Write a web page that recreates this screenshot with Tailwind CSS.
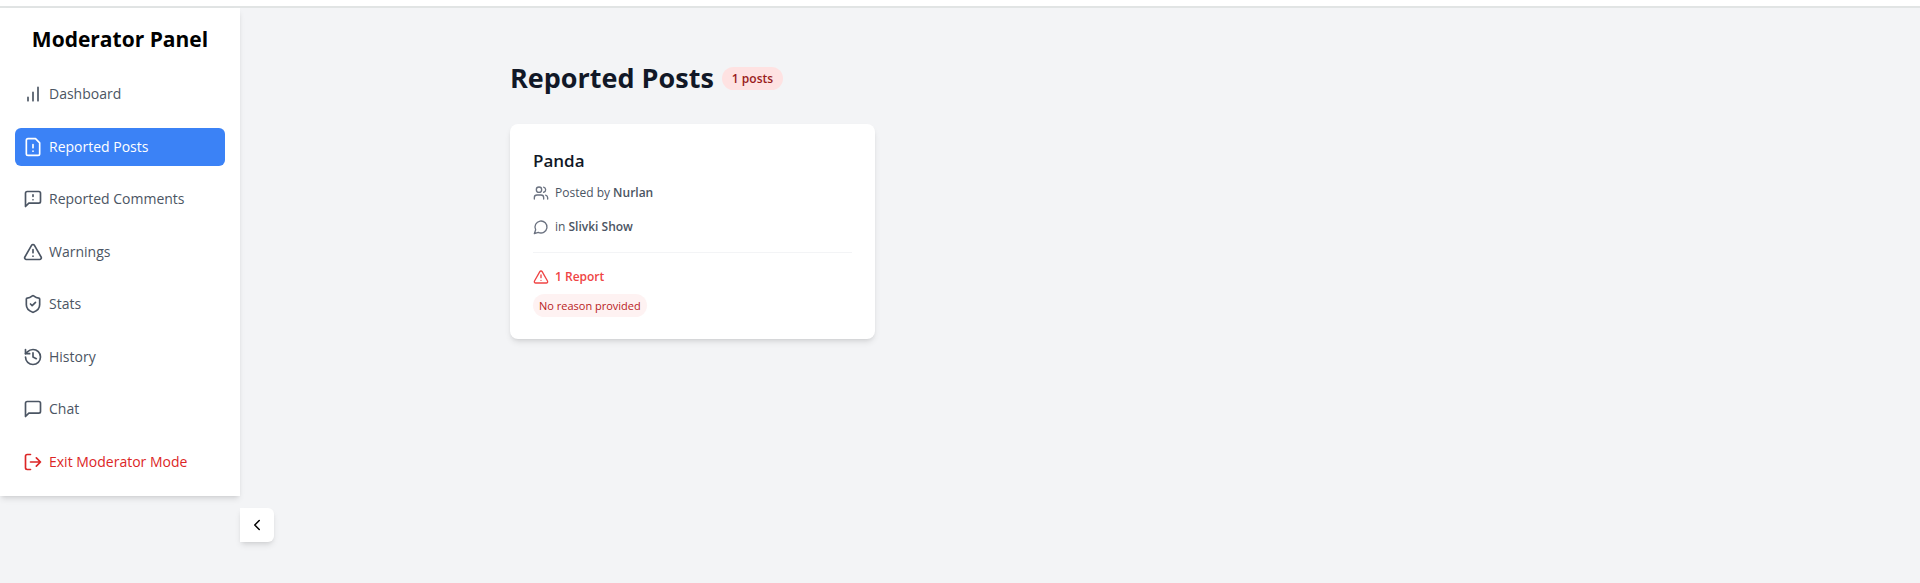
<!DOCTYPE html>
<html lang="en">
<head>
<meta charset="utf-8">
<meta name="viewport" content="width=device-width, initial-scale=1">
<title>Moderator Panel</title>
<script src="https://cdn.jsdelivr.net/npm/@tailwindcss/browser@4"></script>
</head>
<body class="min-h-screen bg-[#f3f4f6] font-['Segoe_UI','Open_Sans','Noto_Sans',sans-serif] text-gray-900">
<svg class="hidden" aria-hidden="true">
  <symbol id="warning" viewBox="0 0 24 24"><path d="m21.73 18-8-14a2 2 0 0 0-3.48 0l-8 14A2 2 0 0 0 4 21h16a2 2 0 0 0 1.73-3"/><path d="M12 9v4M12 17h.01"/></symbol>
</svg>
<header class="h-2 border-b-2 border-[#e1e4e4] bg-white"></header>
<div class="flex items-start">
  <aside class="relative w-60 shrink-0 bg-white px-[15px] pb-2 shadow-md">
    <h2 class="pt-[15px] pb-[13px] text-center text-[21px] leading-8 font-bold text-black">Moderator Panel</h2>
    <nav class="grid h-[420px] grid-rows-8 items-center text-[14px] leading-[22px] text-[#4b5563] [&_svg]:size-5 [&_svg]:shrink-0 [&_svg]:fill-none [&_svg]:stroke-current [&_svg]:stroke-2 [&_a]:flex [&_a]:h-[38px] [&_a]:items-center [&_a]:gap-[6px] [&_a]:rounded-md [&_a]:px-2 [&_svg]:[stroke-linecap:round] [&_svg]:[stroke-linejoin:round]">
      <a href="#"><svg viewBox="0 0 24 24"><path d="M12 20V10M18 20V4M6 20v-4"/></svg>Dashboard</a>
      <a href="#" aria-current="page" class="bg-[#3b82f6] text-white"><svg viewBox="0 0 24 24"><path d="M15 2H6a2 2 0 0 0-2 2v16a2 2 0 0 0 2 2h12a2 2 0 0 0 2-2V7z"/><path d="M12 9v4M12 17h.01"/></svg>Reported Posts</a>
      <a href="#"><svg viewBox="0 0 24 24"><path d="M21 15a2 2 0 0 1-2 2H7l-4 4V5a2 2 0 0 1 2-2h14a2 2 0 0 1 2 2z"/><path d="M12 7v2M12 13h.01"/></svg>Reported Comments</a>
      <a href="#"><svg><use href="#warning"/></svg>Warnings</a>
      <a href="#"><svg viewBox="0 0 24 24"><path d="M20 13c0 5-3.500 7.500-7.660 8.950a1 1 0 0 1-.67-.01C7.500 20.500 4 18 4 13V6a1 1 0 0 1 1-1c2 0 4.500-1.200 6.240-2.720a1.170 1.170 0 0 1 1.520 0C14.510 3.810 17 5 19 5a1 1 0 0 1 1 1z"/><path d="m9 12 2 2 4-4"/></svg>Stats</a>
      <a href="#"><svg viewBox="0 0 24 24"><path d="M3 12a9 9 0 1 0 9-9 9.750 9.750 0 0 0-6.740 2.740L3 8"/><path d="M3 3v5h5M12 7v5l4 2"/></svg>History</a>
      <a href="#"><svg viewBox="0 0 24 24"><path d="M21 15a2 2 0 0 1-2 2H7l-4 4V5a2 2 0 0 1 2-2h14a2 2 0 0 1 2 2z"/></svg>Chat</a>
      <a href="#" class="text-[#dc2626]"><svg viewBox="0 0 24 24"><path d="M9 21H5a2 2 0 0 1-2-2V5a2 2 0 0 1 2-2h4M16 17l5-5-5-5M21 12H9"/></svg>Exit Moderator Mode</a>
    </nav>
    <button type="button" aria-label="Collapse sidebar" class="absolute top-full left-full mt-3 flex size-[34px] items-center justify-center rounded-r-md bg-white text-black shadow-md">
      <svg class="size-[18px] fill-none stroke-current stroke-2" viewBox="0 0 24 24" stroke-linecap="round" stroke-linejoin="round"><path d="m15 18-6-6 6-6"/></svg>
    </button>
  </aside>
  <main class="min-w-0 flex-1">
    <div class="mx-auto max-w-[1140px] pt-12">
      <div class="flex items-center gap-2">
        <h1 class="text-[27px] leading-[44px] font-bold text-[#111827]">Reported Posts</h1>
        <span class="rounded-full bg-[#fee2e2] px-[10px] py-px text-[12px] leading-[21px] font-semibold text-[#991b1b]">1 posts</span>
      </div>
      <div class="mt-6 grid grid-cols-3 gap-[22px]">
        <article class="rounded-lg bg-white px-[23px] pt-[23px] pb-[22px] shadow-md">
          <h3 class="text-[17px] leading-[27px] font-semibold text-[#111827]">Panda</h3>
          <div class="mt-[9px] flex flex-col gap-[14px] text-[12px] leading-5 text-[#4b5563] [&_svg]:size-4 [&_svg]:fill-none [&_svg]:stroke-[#6b7280] [&_svg]:stroke-2">
            <p class="flex items-center gap-[6px]"><svg viewBox="0 0 24 24" stroke-linecap="round" stroke-linejoin="round"><path d="M16 21v-2a4 4 0 0 0-4-4H6a4 4 0 0 0-4 4v2"/><circle cx="9" cy="7" r="4"/><path d="M22 21v-2a4 4 0 0 0-3-3.870M16 3.130a4 4 0 0 1 0 7.750"/></svg><span>Posted by <strong class="font-semibold">Nurlan</strong></span></p>
            <p class="flex items-center gap-[6px]"><svg viewBox="0 0 24 24" stroke-linecap="round" stroke-linejoin="round"><path d="M7.900 20A9 9 0 1 0 4 16.100L2 22Z"/></svg><span>in <strong class="font-semibold">Slivki Show</strong></span></p>
          </div>
          <div class="mt-[15px] border-t border-[#f3f4f6] pt-[14px]">
            <p class="flex items-center gap-[6px] text-[12px] leading-5 font-semibold text-[#ef4444]"><svg class="size-4 fill-none stroke-current stroke-2" stroke-linecap="round" stroke-linejoin="round"><use href="#warning"/></svg>1 Report</p>
            <p class="mt-[7px] flex"><span class="rounded-full bg-[#fef2f2] px-[6px] py-1 text-[11px] leading-[15px] text-[#b91c1c]">No reason provided</span></p>
          </div>
        </article>
      </div>
    </div>
  </main>
</div>
</body>
</html>
